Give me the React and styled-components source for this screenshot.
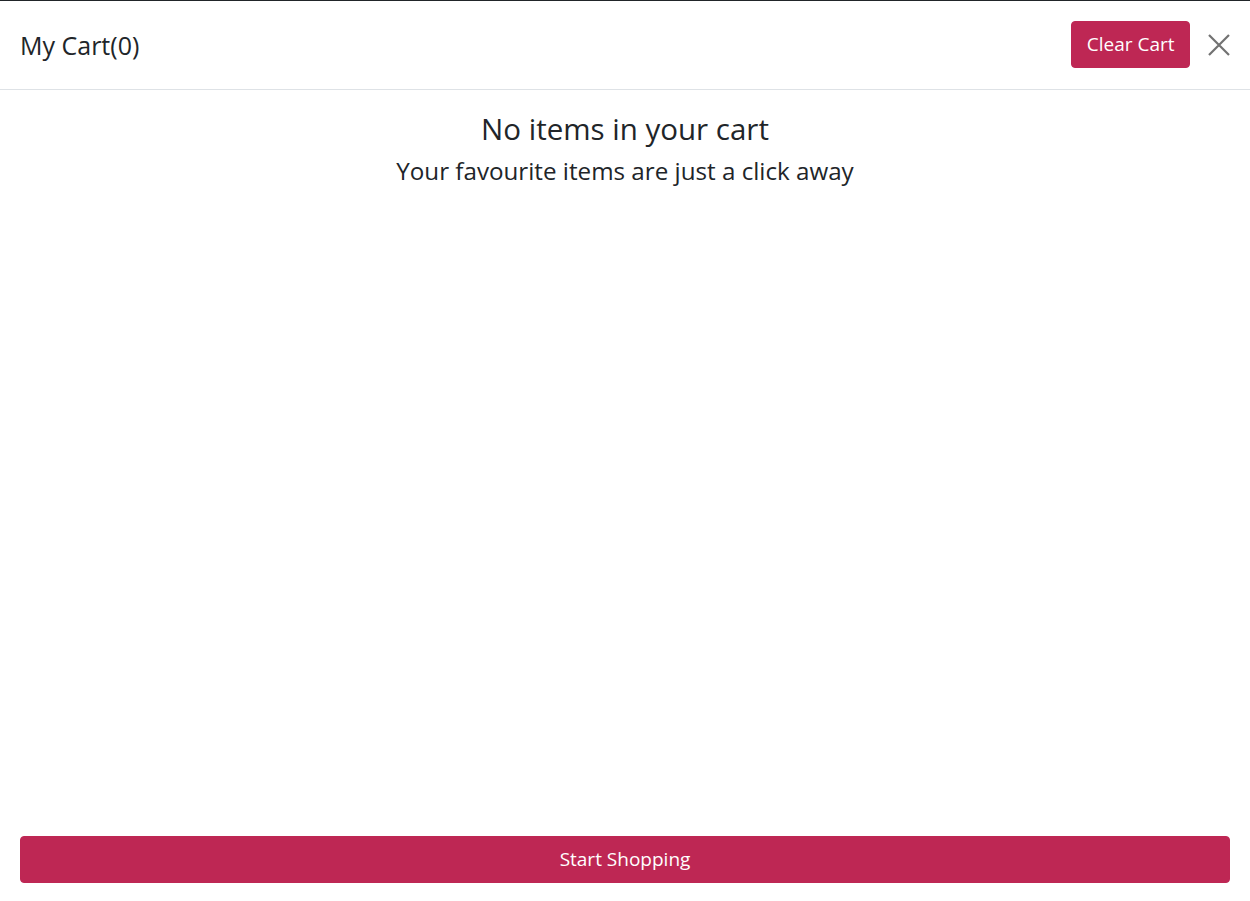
import React from "react";
import styled, { createGlobalStyle } from "styled-components";

const Global = createGlobalStyle`
  * { box-sizing: border-box; }
  html, body { margin: 0; padding: 0; background: #fff; }
  body { font-family: "Open Sans", "Noto Sans", sans-serif; color: #212529; }
`;

const Panel = styled.div`
  display: flex;
  flex-direction: column;
  height: 901px;
  border-top: 1px solid #212529;
  background: #fff;
`;

const Header = styled.header`
  display: flex;
  align-items: flex-start;
  justify-content: space-between;
  padding: 20px;
  border-bottom: 1px solid #dee2e6;
  height: 89px;
`;

const Title = styled.h4`
  margin: 9px 0 0;
  font-size: 25px;
  font-weight: 400;
  line-height: 1.2;
  color: #212529;
`;

const Actions = styled.div`
  display: flex;
  align-items: center;
  gap: 18px;
`;

const Button = styled.button`
  font-family: inherit;
  background: #be2754;
  color: #fff;
  border: 1px solid #be2754;
  border-radius: 4px;
  font-size: 19px;
  line-height: 1.5;
  height: 47px;
  padding: 0 ${(p) => (p.$block ? "16px" : "14.5px")};
  cursor: pointer;
  width: ${(p) => (p.$block ? "100%" : "auto")};
`;

const Close = styled.button`
  background: none;
  border: none;
  padding: 0;
  width: 22px;
  height: 24px;
  display: flex;
  align-items: center;
  justify-content: center;
  color: #727272;
  cursor: pointer;
`;

const Body = styled.main`
  flex: 1;
  padding: 21px 20px;
  text-align: center;
`;

const Heading = styled.h3`
  margin: 0 0 10px;
  font-size: 29.5px;
  font-weight: 500;
  line-height: 1.2;
`;

const Sub = styled.h5`
  margin: 0;
  font-size: 24.2px;
  font-weight: 400;
  line-height: 1.2;
`;

const Footer = styled.footer`
  padding: 0 20px 18px;
`;

export default function App() {
  return (
    <>
      <Global />
      <Panel>
        <Header>
          <Title>My Cart(0)</Title>
          <Actions>
            <Button>Clear Cart</Button>
            <Close aria-label="Close">
              <svg width="22" height="22" viewBox="0 0 22 22">
                <path d="M1 1 L21 21 M21 1 L1 21" stroke="currentColor" strokeWidth="2.2" fill="none" />
              </svg>
            </Close>
          </Actions>
        </Header>
        <Body>
          <Heading>No items in your cart</Heading>
          <Sub>Your favourite items are just a click away</Sub>
        </Body>
        <Footer>
          <Button $block>Start Shopping</Button>
        </Footer>
      </Panel>
    </>
  );
}
